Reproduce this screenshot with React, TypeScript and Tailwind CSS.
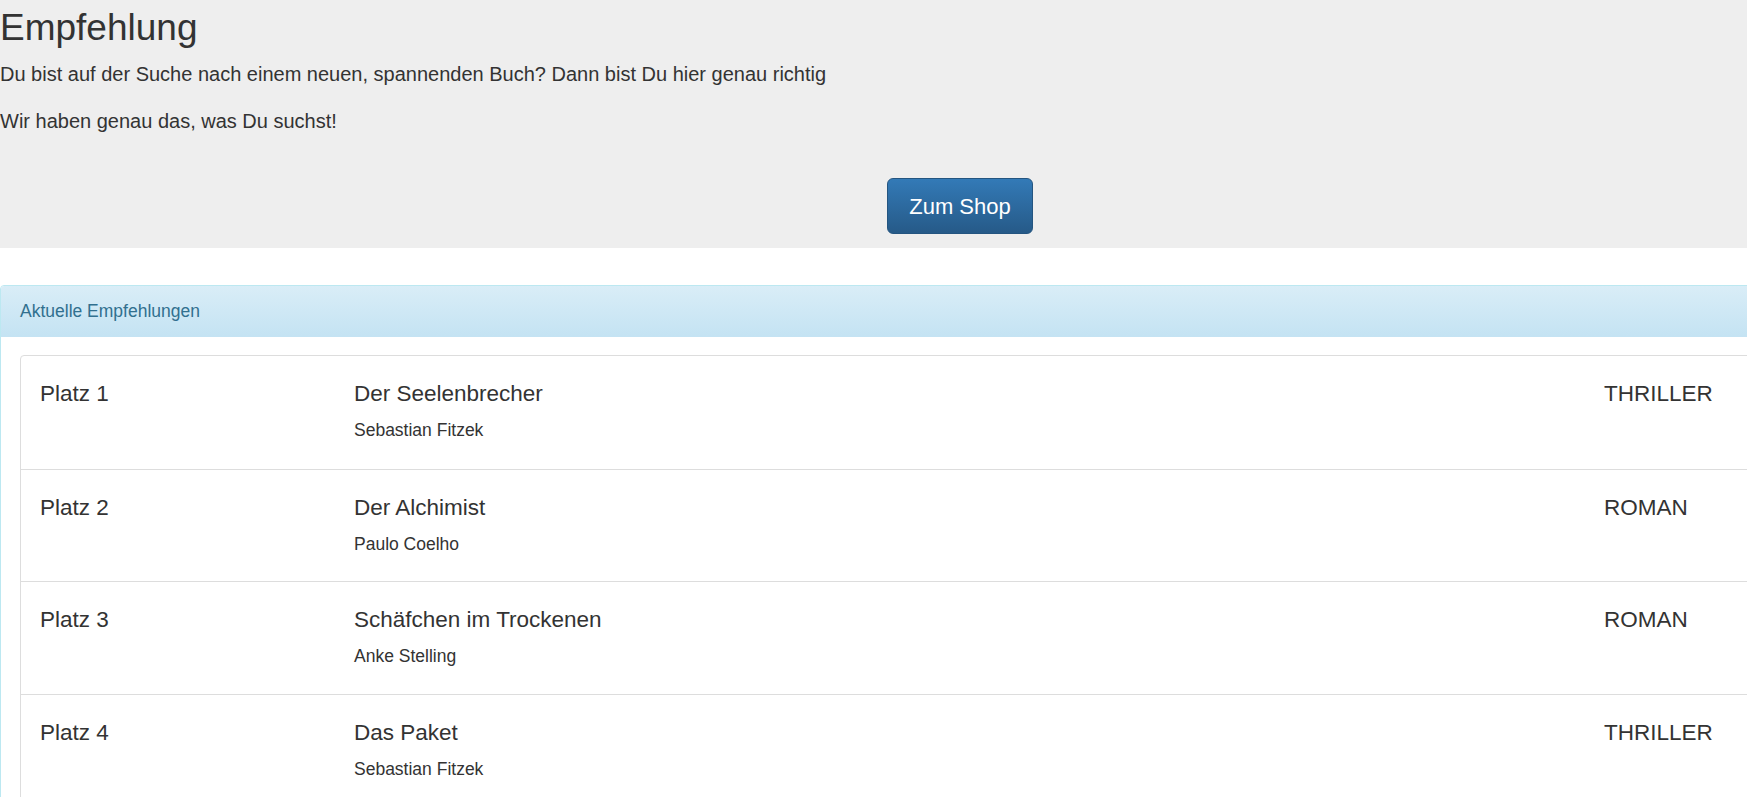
const books = [
  { place: "Platz 1", title: "Der Seelenbrecher", author: "Sebastian Fitzek", genre: "THRILLER" },
  { place: "Platz 2", title: "Der Alchimist", author: "Paulo Coelho", genre: "ROMAN" },
  { place: "Platz 3", title: "Schäfchen im Trockenen", author: "Anke Stelling", genre: "ROMAN" },
  { place: "Platz 4", title: "Das Paket", author: "Sebastian Fitzek", genre: "THRILLER" },
];

export default function App() {
  return (
    <div className="w-full overflow-hidden bg-white font-['Liberation_Sans',Arial,sans-serif] text-[#333]">
      <div className="w-[1920px]">
        {/* Jumbotron */}
        <section className="flex h-[248px] flex-col bg-[#eee]">
          <h1 className="pt-[6px] text-[37px] leading-[44px] font-normal">Empfehlung</h1>
          <p className="mt-[10px] text-[20px] leading-[28px]">
            Du bist auf der Suche nach einem neuen, spannenden Buch? Dann bist Du hier genau richtig
          </p>
          <p className="mt-[19px] text-[20px] leading-[28px]">Wir haben genau das, was Du suchst!</p>
          <div className="mt-[43px] flex justify-center">
            <button className="h-[56px] w-[146px] rounded-[6px] border border-[#245580] bg-gradient-to-b from-[#337ab7] to-[#265a88] text-[22px] text-white">
              Zum Shop
            </button>
          </div>
        </section>

        {/* Panel */}
        <section className="mt-[37px] rounded-t-[4px] border border-[#bce8f1]">
          <div className="h-[51px] rounded-t-[3px] bg-gradient-to-b from-[#d9edf7] to-[#c4e3f3] pl-[19px] text-[17.5px] leading-[51px] text-[#31708f]">
            Aktuelle Empfehlungen
          </div>
          <div className="px-[19px] pt-[18px] pb-[19px]">
            <div className="rounded-t-[4px] border border-[#ddd]">
              {books.map((b, i) => (
                <div
                  key={b.place}
                  className={
                    "grid h-[112.5px] grid-cols-[314px_1250px_1fr] pl-[19px] pt-[25px] " +
                    (i > 0 ? "border-t border-[#ddd]" : "")
                  }
                >
                  <div className="text-[22.5px] leading-[26px]">{b.place}</div>
                  <div className="flex flex-col">
                    <span className="text-[22.5px] leading-[26px]">{b.title}</span>
                    <span className="mt-[11px] text-[17.5px] leading-[24px]">{b.author}</span>
                  </div>
                  <div className="text-[22.5px] leading-[26px]">{b.genre}</div>
                </div>
              ))}
            </div>
          </div>
        </section>
      </div>
    </div>
  );
}
